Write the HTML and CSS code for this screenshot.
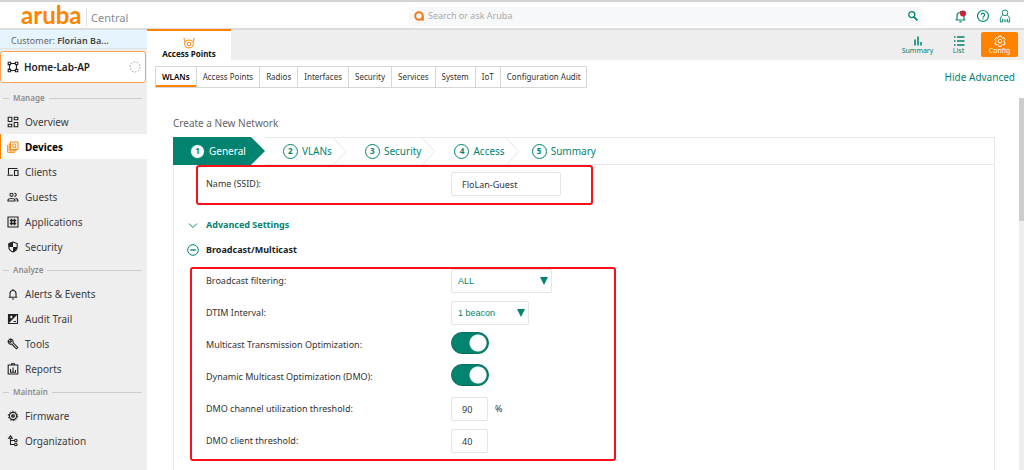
FILE: index.html
```html
<!DOCTYPE html>
<html lang="en">
<head>
<meta charset="utf-8">
<title>Aruba Central</title>
<link rel="stylesheet" href="styles.css">
</head>
<body>
<header class="topbar">
  <div class="brand"><span class="brand-name">aruba</span><span class="brand-product">Central</span></div>
  <form class="search">
    <svg class="search-mark" viewBox="0 0 10 10"><circle cx="5" cy="5" r="3.8"/><path d="M8.800 5v4.800"/></svg>
    <input class="search-input" type="text" placeholder="Search or ask Aruba" aria-label="Search or ask Aruba">
    <button class="icon-button" type="button" aria-label="Search"><svg class="icon" viewBox="0 0 12 12"><circle cx="4.800" cy="4.600" r="3"/><path d="M7 6.800l3.400 3.600" stroke-width="1.700"/></svg></button>
  </form>
  <div class="top-actions">
    <button class="icon-button" type="button" aria-label="Notifications"><svg class="icon icon-top" viewBox="0 0 14 14"><path d="M1.500 11h10M3 11V7a3.500 3.500 0 0 1 7 0v4M6.500 3.600V2M5.400 12.800h2.200"/><circle class="alert-dot" cx="9" cy="4.500" r="3"/></svg></button>
    <button class="icon-button" type="button" aria-label="Help"><svg class="icon icon-top" viewBox="0 0 14 14"><circle cx="7" cy="7" r="5.500"/><path d="M5.400 5.700a1.600 1.600 0 1 1 2.400 1.500c-.6.4-.8.6-.8 1.200M7 9.300v1.200"/></svg></button>
    <button class="icon-button" type="button" aria-label="Account"><svg class="icon icon-top" viewBox="0 0 14 14"><g stroke-width=".9"><circle cx="7" cy="3.800" r="2.800"/><path d="M5 5.800C3.200 7 2.300 8.500 2.300 10.800v2.200h2.100V9.800M9 5.800c1.800 1.200 2.700 2.700 2.700 5v2.200H9.600V9.800M6.100 13v-2.700M7.900 13v-2.700"/></g></svg></button>
  </div>
</header>
<div class="shell">
  <aside class="sidebar">
    <div class="customer">Customer: <b>Florian Ba...</b></div>
    <button class="site" type="button">
      <svg class="nav-icon" viewBox="0 0 12 12"><path d="M2.500 3.500v5M9.500 3.500v5M3.500 2.500h5M3.500 9.500h5"/><path d="M1.200 1.200h2.400v2.400H1.200zM8.400 1.200h2.400v2.400H8.400zM1.200 8.400h2.400v2.400H1.200zM8.400 8.400h2.400v2.400H8.400z"/></svg>
      <span class="site-name">Home-Lab-AP</span>
      <svg class="site-status" viewBox="0 0 12 12"><circle cx="6" cy="6" r="5"/></svg>
    </button>
    <nav>
      <h2 class="nav-title">Manage</h2>
      <ul class="nav-list">
        <li><a class="nav-link" href="#"><svg class="nav-icon" viewBox="0 0 12 12"><path d="M1.200 1.200h3.600v4.300H1.200zM7.200 1.200h3.600v2.600H7.200zM1.200 8.200h3.600v2.600H1.200zM7.200 6.500h3.600v4.300H7.200z"/></svg>Overview</a></li>
        <li><a class="nav-link active" href="#"><svg class="nav-icon" viewBox="0 0 12 12"><path d="M3.500 1h7.500v7.500H3.500zM2.200 2.500v7.300H9.500M.7 4v7.300h7.300"/><circle cx="7.200" cy="4.700" r="1.700"/><path d="M8.300 6l1 1.200"/></svg>Devices</a></li>
        <li><a class="nav-link" href="#"><svg class="nav-icon" viewBox="0 0 12 12"><path d="M10.500 2.500h-9v6M.3 9.300H6M7.500 4.500h3.500v5H7.500z"/></svg>Clients</a></li>
        <li><a class="nav-link" href="#"><svg class="nav-icon" viewBox="0 0 12 12"><circle cx="4.500" cy="3.800" r="1.600"/><path d="M1 10V8.800C1.500 7 7.500 7 8 8.800V10zM7.300 2.300c2.500-.4 2.500 3.400 0 3M8.500 7.200c1.800.3 2.400 1 2.400 2.800H9.500"/></svg>Guests</a></li>
        <li><a class="nav-link" href="#"><svg class="nav-icon" viewBox="0 0 12 12"><path d="M1 1h10v10H1z"/><path d="M4.500 2.800v6.400M7.500 2.800v6.400M2.800 4.500h6.400M2.800 7.500h6.400" stroke-width="1.400"/></svg>Applications</a></li>
        <li><a class="nav-link" href="#"><svg class="nav-icon" viewBox="0 0 12 12"><path d="M6 1l4.200 1.600v3.200c0 2.500-2 4.500-4.200 5.200-2.200-.7-4.200-2.700-4.200-5.200V2.600z"/><path class="solid" d="M6 1v5H1.800V2.600zM6 6h4.200C10 8.500 8 10.300 6 11z"/></svg>Security</a></li>
      </ul>
      <h2 class="nav-title">Analyze</h2>
      <ul class="nav-list">
        <li><a class="nav-link" href="#"><svg class="nav-icon" viewBox="0 0 12 12"><path d="M1.800 9.200h8.400M3 9V5.500a3 3 0 0 1 6 0V9M6 2.500V1M5 11h2"/></svg>Alerts &amp; Events</a></li>
        <li><a class="nav-link" href="#"><svg class="nav-icon" viewBox="0 0 12 12"><path d="M1.500 1.500h9v9h-9z"/><path class="solid" d="M1.500 10.500v-9h9z"/><path class="light" d="M3 4h2.500M4.300 2.700v2.600"/><path d="M6.500 8.500H9"/></svg>Audit Trail</a></li>
        <li><a class="nav-link" href="#"><svg class="nav-icon" viewBox="0 0 12 12"><path d="M2.600 1.300l1.900 1.900-1.300 1.300-1.900-1.900C.6 4.600 2.300 6.800 4.700 6L9.400 10.800l1.400-1.400L6 4.700C6.800 2.300 4.600.6 2.600 1.300z"/></svg>Tools</a></li>
        <li><a class="nav-link" href="#"><svg class="nav-icon" viewBox="0 0 12 12"><path d="M1.200 2h9.600v9H1.200zM4.500 2V.8h3V2M3.500 9V6M6 9V4.500M8.500 9V7M3 9.200h6"/></svg>Reports</a></li>
      </ul>
      <h2 class="nav-title">Maintain</h2>
      <ul class="nav-list">
        <li><a class="nav-link" href="#"><svg class="nav-icon" viewBox="0 0 12 12"><circle cx="6" cy="6" r="3.600" stroke-width="1.200"/><circle cx="6" cy="6" r="4.700" stroke-width="1" stroke-dasharray="1.500 1.450"/><path d="M4 5.200h4M4 6.800h4M6 4v4"/></svg>Firmware</a></li>
        <li><a class="nav-link" href="#"><svg class="nav-icon" viewBox="0 0 12 12"><path d="M3.500 3v6.500h4M3.500 5.500h4M1.800 3.300h3.500M3.500.8L1.700 3.300h3.600z"/><circle cx="8.800" cy="5.500" r="1.300"/><circle cx="8.800" cy="9.500" r="1.300"/></svg>Organization</a></li>
      </ul>
    </nav>
  </aside>
  <main class="main">
    <div class="context">
      <button class="context-tab" type="button">
        <svg class="context-icon" viewBox="0 0 12 12"><path d="M1.200 1v2.500l1.300.8M10.800 1v2.500l-1.300.8M2 4c-1 3.500.2 6.500 2.600 6.800h2.800C9.800 10.500 11 7.500 10 4M2.500 4.300C4 2.600 8 2.600 9.500 4.300"/><circle cx="6" cy="7" r="1.800"/></svg>
        Access Points
      </button>
      <div class="views">
        <button class="view" type="button"><svg class="view-icon" viewBox="0 0 12 12"><path d="M3 10.500V4.500M6 10.500v-9M9 10.500V7" stroke-width="1.500"/></svg>Summary</button>
        <button class="view" type="button"><svg class="view-icon" viewBox="0 0 12 12"><path d="M1 2h1.500M4 2h7.500M1 6h1.500M4 6h7.500M1 10h1.500M4 10h7.500" stroke-width="1.300"/></svg>List</button>
        <button class="view current" type="button"><svg class="view-icon" viewBox="0 0 12 12"><path d="M4.900 1h2.200l.4 1.500 1.100.6 1.500-.4 1.100 1.900-1.100 1.100v1.200l1.100 1.100-1.100 1.900-1.500-.4-1.100.6-.4 1.400H4.900l-.4-1.400-1.100-.6-1.500.4L.8 8l1.100-1.100V5.700L.8 4.600l1.100-1.900 1.500.4 1.100-.6z"/><circle cx="6" cy="6.200" r="1.800"/></svg>Config</button>
      </div>
    </div>
    <div class="toolbar">
      <div class="tabs">
        <button class="tab selected" type="button">WLANs</button>
        <button class="tab" type="button">Access Points</button>
        <button class="tab" type="button">Radios</button>
        <button class="tab" type="button">Interfaces</button>
        <button class="tab" type="button">Security</button>
        <button class="tab" type="button">Services</button>
        <button class="tab" type="button">System</button>
        <button class="tab" type="button">IoT</button>
        <button class="tab" type="button">Configuration Audit</button>
      </div>
      <a class="advanced-link" href="#">Hide Advanced</a>
    </div>
    <div class="content">
      <section class="wizard">
        <h1 class="wizard-title">Create a New Network</h1>
        <div class="wizard-panel">
          <ol class="steps">
            <li class="step now"><span class="step-number">1</span>General<svg class="step-arrow" viewBox="0 0 14 28"><path d="M0 0l14 14L0 28z"/></svg></li>
            <li class="step"><span class="step-number">2</span>VLANs<svg class="step-arrow" viewBox="0 0 14 28"><path d="M0 0l13 14L0 28"/></svg></li>
            <li class="step"><span class="step-number">3</span>Security<svg class="step-arrow" viewBox="0 0 14 28"><path d="M0 0l13 14L0 28"/></svg></li>
            <li class="step"><span class="step-number">4</span>Access<svg class="step-arrow" viewBox="0 0 14 28"><path d="M0 0l13 14L0 28"/></svg></li>
            <li class="step last"><span class="step-number">5</span>Summary</li>
          </ol>
          <form class="form">
            <div class="marked marked-name">
              <div class="field"><label class="field-label" for="ssid">Name (SSID):</label><input class="text-input" id="ssid" type="text" value="FloLan-Guest"></div>
            </div>
            <button class="expander green" type="button"><svg class="expander-icon" viewBox="0 0 12 12"><path d="M2 4.500L6 8.500l4-4"/></svg>Advanced Settings</button>
            <button class="expander" type="button"><svg class="expander-icon" viewBox="0 0 12 12"><circle cx="6" cy="6" r="5.300"/><path d="M3.300 6h5.400" stroke-width="1.400"/></svg>Broadcast/Multicast</button>
            <div class="marked marked-cast">
              <div class="field"><label class="field-label" for="filter">Broadcast filtering:</label><span class="select-wrap wide"><select class="select" id="filter"><option>ALL</option></select></span></div>
              <div class="field"><label class="field-label" for="dtim">DTIM Interval:</label><span class="select-wrap"><select class="select" id="dtim"><option>1 beacon</option></select></span></div>
              <div class="field"><label class="field-label" for="mto">Multicast Transmission Optimization:</label><input class="switch" id="mto" type="checkbox" role="switch" checked></div>
              <div class="field"><label class="field-label" for="dmo">Dynamic Multicast Optimization (DMO):</label><input class="switch" id="dmo" type="checkbox" role="switch" checked></div>
              <div class="field"><label class="field-label" for="util">DMO channel utilization threshold:</label><input class="text-input short" id="util" type="text" value="90"><span class="unit">%</span></div>
              <div class="field"><label class="field-label" for="clients">DMO client threshold:</label><input class="text-input short" id="clients" type="text" value="40"></div>
            </div>
          </form>
        </div>
      </section>
      <div class="scroll-track"><div class="scroll-thumb"></div></div>
    </div>
  </main>
</div>
</body>
</html>
```
FILE: styles.css
```css
:root {
  --green: #01836f;
  --orange: #ff8300;
  --line: #e8e9ed;
}
* { box-sizing: border-box; }
body {
  margin: 0;
  min-height: 100vh;
  display: flex;
  flex-direction: column;
  background: #fff;
  color: #333;
  font-family: "Noto Sans", "Open Sans", sans-serif;
  font-size: 9px;
  line-height: 12px;
}
button, input, select { font: inherit; color: inherit; }
button { border: 0; padding: 0; background: none; cursor: pointer; }
a { color: inherit; text-decoration: none; }
svg { fill: none; stroke: currentColor; flex: none; }
h1, h2, ul, ol { margin: 0; padding: 0; font-weight: 400; }
ul, ol { list-style: none; }

/* Top bar */
.topbar {
  display: flex;
  align-items: center;
  height: 30px;
  border-top: 2px solid #d4d4d4;
  border-bottom: 2px solid #dcdcdc;
  padding: 0 12px 0 21px;
}
.brand { display: flex; align-items: center; width: 388px; padding-top: 4px; }
.brand-name {
  width: 65px;
  color: var(--orange);
  font: 700 24px/18px Lato, sans-serif;
  padding-bottom: 4px;
}
.brand-product {
  border-left: 1px solid #ddd;
  padding-left: 4px;
  color: #8a8a8a;
  font-size: 11px;
  line-height: 17px;
}
.search {
  flex: 1;
  display: flex;
  align-items: center;
  gap: 4px;
  height: 19px;
  padding: 0 4px 0 5px;
  margin-top: 2px;
  border-radius: 2px;
  background: #f7f8f9;
}
.search-mark { width: 10px; height: 10px; color: #f27a1a; stroke-width: 2; }
.search-input { flex: 1; min-width: 0; border: 0; padding: 0; background: none; outline: 0; }
.search-input::placeholder { color: #aaa; opacity: 1; }
.icon-button { display: flex; color: var(--green); }
.icon { width: 12px; height: 12px; stroke-width: 1.3; }
.icon-top { width: 14px; height: 14px; stroke-width: 1.2; }
.alert-dot { fill: #cf1f36; stroke: none; }
.top-actions { display: flex; gap: 8px; padding: 2px 0 0 31px; }

/* Sidebar */
.shell { flex: 1; display: flex; }
.sidebar { width: 147px; flex: none; background: #eee; }
.customer {
  height: 19px;
  padding-left: 11px;
  border-bottom: 1px solid #d9e3e8;
  background: #e6f5fd;
  color: #666;
  line-height: 21px;
}
.customer b { font-weight: 600; color: #444; }
.site {
  display: flex;
  align-items: center;
  gap: 5px;
  width: 146px;
  height: 32px;
  margin: 2px 0 5px;
  padding: 0 4px 0 6px;
  border: 1px solid #ffa050;
  border-radius: 3px;
  background: #fff;
  color: #222;
  font-size: 10px;
  font-weight: 600;
  text-align: left;
}
.site-name { flex: 1; }
.site-status { width: 12px; height: 12px; color: #999; stroke-dasharray: 1.5 1.6; }
.nav-title {
  display: flex;
  align-items: center;
  gap: 4px;
  height: 20px;
  padding: 0 5px 0 3px;
  color: #8c8c8c;
  font-size: 8px;
  font-weight: 600;
}
.nav-title::before, .nav-title::after { content: ""; height: 1px; background: #ccc; }
.nav-title::before { width: 6px; }
.nav-title::after { flex: 1; }
.nav-list { padding: 1px 0; }
.nav-link {
  display: flex;
  align-items: center;
  gap: 6px;
  height: 25px;
  padding-left: 6px;
  border-left: 1px solid transparent;
  color: #3c3c3c;
  font-size: 10px;
}
.nav-icon { width: 12px; height: 12px; color: #222; stroke-width: 1.1; }
.solid { fill: currentColor; stroke: none; }
.light { stroke: #fff; }
.nav-link.active { border-color: var(--orange); background: #fff; color: #000; font-weight: 700; }
.active .nav-icon { color: var(--orange); stroke-width: 1; }

/* Context bar */
.main { flex: 1; min-width: 0; display: flex; flex-direction: column; }
.context { display: flex; justify-content: space-between; height: 30px; background: #eee; }
.context-tab {
  display: flex;
  flex-direction: column;
  align-items: center;
  width: 84px;
  margin-top: -1px;
  padding-top: 6px;
  border-top: 2px solid var(--orange);
  background: #fff;
  color: #111;
  font-size: 8px;
  line-height: 9px;
  font-weight: 700;
}
.context-icon { width: 12px; height: 12px; color: var(--orange); }
.views { display: flex; gap: 4px; padding: 2px 6px 3px 0; }
.view {
  display: flex;
  flex-direction: column;
  align-items: center;
  justify-content: center;
  width: 37px;
  color: var(--green);
  font-size: 7px;
  line-height: 7px;
}
.view.current { border-radius: 2px; background: var(--orange); color: #fff; }
.view-icon { width: 12px; height: 12px; }

/* Tabs */
.toolbar {
  display: flex;
  justify-content: space-between;
  align-items: center;
  padding: 6px 9px 0 8px;
}
.tabs { display: flex; border: 1px solid #d6d6d6; }
.tab { height: 20px; padding: 0 6px; font-size: 8px; line-height: 20px; border-right: 1px solid #d6d6d6; }
.tab:last-child { border-right: 0; padding-right: 5px; }
.tab.selected { color: #000; font-weight: 600; box-shadow: inset 0 -2px var(--orange); }
.advanced-link { color: var(--green); font-size: 10px; }

/* Wizard */
.content { flex: 1; display: flex; margin-top: 10px; }
.wizard { flex: 1; display: flex; flex-direction: column; padding: 18px 24px 0 26px; }
.wizard-title { color: #666; font-size: 10px; line-height: 14px; margin-bottom: 7px; }
.wizard-panel { flex: 1; border: 1px solid var(--line); border-width: 1px 1px 0; }
.steps {
  display: flex;
  height: 27px;
  border-bottom: 1px solid var(--line);
  color: var(--green);
  font-size: 10px;
}
.step { display: flex; align-items: center; gap: 4px; padding-left: 18px; }
.step.last { padding-left: 12px; }
.step-number {
  display: grid;
  place-items: center;
  width: 15px;
  height: 15px;
  border: 1px solid var(--green);
  border-radius: 50%;
  background: #fff;
  color: var(--green);
  font-size: 8px;
  font-weight: 700;
  line-height: 8px;
}
.step-arrow { width: 14px; height: 27px; margin-left: -3px; color: #e3e4ea; }
.step.now {
  margin: -1px 0 -1px -1px;
  padding-left: 17px;
  background: linear-gradient(to left, #fff 14px, var(--green) 14px);
  color: #fff;
}
.now .step-arrow { height: 28px; margin-left: 1px; fill: var(--green); stroke: none; }

/* Form */
.form { display: flex; flex-direction: column; align-items: flex-start; padding: 0 14px 8px; }
.marked { border: 2px solid #f8101a; border-radius: 3px; }
.marked-name { width: 397px; margin: 0 0 7px 8px; padding: 5px 8px 7px; }
.marked-cast {
  display: grid;
  gap: 8px;
  width: 426px;
  margin: 5px 0 0 2px;
  padding: 0 14px 6px;
}
.field { display: flex; align-items: center; height: 24px; }
.field-label { width: 245px; flex: none; }
.text-input {
  width: 110px;
  height: 24px;
  padding: 0 10px;
  border: 1px solid #e4e4e4;
  border-radius: 2px;
  background: #fff;
}
.text-input.short { width: 37px; }
.unit { padding-left: 7px; }
.select-wrap { position: relative; width: 78px; }
.select-wrap.wide { width: 101px; }
.select-wrap::after {
  content: "";
  position: absolute;
  right: 4px;
  top: 8px;
  border: 4px solid transparent;
  border-top: 8px solid var(--green);
  border-bottom: 0;
  pointer-events: none;
}
.select {
  appearance: none;
  display: block;
  width: 100%;
  height: 24px;
  padding: 0 6px;
  border: 1px solid #e4e4e4;
  border-radius: 2px;
  background: #fff;
  color: var(--green);
  font-family: "Liberation Sans", Arial, sans-serif;
}
.switch {
  appearance: none;
  width: 38px;
  height: 22px;
  margin: 0 0 4px;
  border: 1px solid #01705f;
  border-radius: 11px;
  background: radial-gradient(circle at 26px 10px, #fff 8px, var(--green) 9px);
}
.expander {
  display: flex;
  align-items: center;
  gap: 7px;
  height: 25px;
  margin-left: -1px;
  color: #222;
  font-weight: 700;
}
.expander.green { color: var(--green); }
.expander-icon { width: 12px; height: 12px; color: var(--green); }

/* Scrollbar */
.scroll-track { width: 5px; background: #eee; }
.scroll-thumb { height: 33%; background: #cdcdcd; }
```
